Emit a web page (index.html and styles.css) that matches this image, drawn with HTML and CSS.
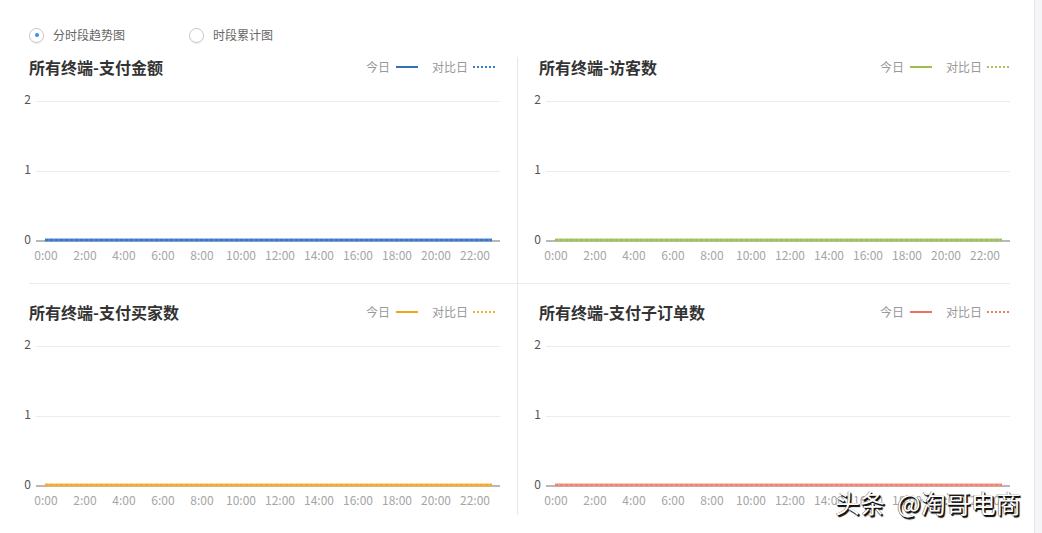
FILE: index.html
```html
<!DOCTYPE html>
<html lang="zh">
<head>
<meta charset="utf-8">
<title>分时段趋势图</title>
<link rel="stylesheet" href="styles.css">
</head>
<body>
<div class="page">
  <div class="radios">
    <label class="radio"><span class="dot checked"></span><span>分时段趋势图</span></label>
    <label class="radio"><span class="dot"></span><span>时段累计图</span></label>
  </div>
  <div class="grid">
    <section class="cell left top">
      <div class="head"><h3>所有终端-支付金额</h3>
        <div class="legend blue"><span>今日</span><i class="solid"></i><span class="cmp">对比日</span><i class="dots"></i></div></div>
      <svg class="chart blue" width="480" height="180" viewBox="0 0 480 180">
        <g class="grid-l"><line x1="16" y1="11.5" x2="480" y2="11.5"/><line x1="16" y1="81.5" x2="480" y2="81.5"/></g>
        <g class="ylab"><text x="11" y="14">2</text><text x="11" y="84">1</text><text x="11" y="154">0</text></g>
        <line class="base" x1="16" y1="151" x2="480" y2="151"/>
        <line class="data" x1="25" y1="150" x2="472" y2="150"/>
        <line class="dash" x1="25" y1="150" x2="472" y2="150"/>
        <g class="xlab"><text x="26" y="170">0:00</text><text x="65" y="170">2:00</text><text x="104" y="170">4:00</text><text x="143" y="170">6:00</text><text x="182" y="170">8:00</text><text x="221" y="170">10:00</text><text x="260" y="170">12:00</text><text x="299" y="170">14:00</text><text x="338" y="170">16:00</text><text x="377" y="170">18:00</text><text x="416" y="170">20:00</text><text x="455" y="170">22:00</text></g>
      </svg>
    </section>
    <section class="cell right top">
      <div class="head"><h3>所有终端-访客数</h3>
        <div class="legend green"><span>今日</span><i class="solid"></i><span class="cmp">对比日</span><i class="dots"></i></div></div>
      <svg class="chart green" width="480" height="180" viewBox="0 0 480 180">
        <g class="grid-l"><line x1="16" y1="11.5" x2="480" y2="11.5"/><line x1="16" y1="81.5" x2="480" y2="81.5"/></g>
        <g class="ylab"><text x="11" y="14">2</text><text x="11" y="84">1</text><text x="11" y="154">0</text></g>
        <line class="base" x1="16" y1="151" x2="480" y2="151"/>
        <line class="data" x1="25" y1="150" x2="472" y2="150"/>
        <line class="dash" x1="25" y1="150" x2="472" y2="150"/>
        <g class="xlab"><text x="26" y="170">0:00</text><text x="65" y="170">2:00</text><text x="104" y="170">4:00</text><text x="143" y="170">6:00</text><text x="182" y="170">8:00</text><text x="221" y="170">10:00</text><text x="260" y="170">12:00</text><text x="299" y="170">14:00</text><text x="338" y="170">16:00</text><text x="377" y="170">18:00</text><text x="416" y="170">20:00</text><text x="455" y="170">22:00</text></g>
      </svg>
    </section>
    <section class="cell left bottom">
      <div class="head"><h3>所有终端-支付买家数</h3>
        <div class="legend orange"><span>今日</span><i class="solid"></i><span class="cmp">对比日</span><i class="dots"></i></div></div>
      <svg class="chart orange" width="480" height="180" viewBox="0 0 480 180">
        <g class="grid-l"><line x1="16" y1="11.5" x2="480" y2="11.5"/><line x1="16" y1="81.5" x2="480" y2="81.5"/></g>
        <g class="ylab"><text x="11" y="14">2</text><text x="11" y="84">1</text><text x="11" y="154">0</text></g>
        <line class="base" x1="16" y1="151" x2="480" y2="151"/>
        <line class="data" x1="25" y1="150" x2="472" y2="150"/>
        <line class="dash" x1="25" y1="150" x2="472" y2="150"/>
        <g class="xlab"><text x="26" y="170">0:00</text><text x="65" y="170">2:00</text><text x="104" y="170">4:00</text><text x="143" y="170">6:00</text><text x="182" y="170">8:00</text><text x="221" y="170">10:00</text><text x="260" y="170">12:00</text><text x="299" y="170">14:00</text><text x="338" y="170">16:00</text><text x="377" y="170">18:00</text><text x="416" y="170">20:00</text><text x="455" y="170">22:00</text></g>
      </svg>
    </section>
    <section class="cell right bottom">
      <div class="head"><h3>所有终端-支付子订单数</h3>
        <div class="legend red"><span>今日</span><i class="solid"></i><span class="cmp">对比日</span><i class="dots"></i></div></div>
      <svg class="chart red" width="480" height="180" viewBox="0 0 480 180">
        <g class="grid-l"><line x1="16" y1="11.5" x2="480" y2="11.5"/><line x1="16" y1="81.5" x2="480" y2="81.5"/></g>
        <g class="ylab"><text x="11" y="14">2</text><text x="11" y="84">1</text><text x="11" y="154">0</text></g>
        <line class="base" x1="16" y1="151" x2="480" y2="151"/>
        <line class="data" x1="25" y1="150" x2="472" y2="150"/>
        <line class="dash" x1="25" y1="150" x2="472" y2="150"/>
        <g class="xlab"><text x="26" y="170">0:00</text><text x="65" y="170">2:00</text><text x="104" y="170">4:00</text><text x="143" y="170">6:00</text><text x="182" y="170">8:00</text><text x="221" y="170">10:00</text><text x="260" y="170">12:00</text><text x="299" y="170">14:00</text><text x="338" y="170">16:00</text><text x="377" y="170">18:00</text><text x="416" y="170">20:00</text><text x="455" y="170">22:00</text></g>
      </svg>
    </section>
  </div>
  <div class="watermark"><span>头条</span><span>@淘哥电商</span></div>
</div>
</body>
</html>
```
FILE: styles.css
```css
html, body {
  margin: 0;
  padding: 0;
  background: #f4f5f7;
  font-family: "Noto Sans CJK SC", "Microsoft YaHei", sans-serif;
}
.page {
  position: relative;
  width: 1035px;
  height: 533px;
  box-sizing: border-box;
  background: #fff;
  border-right: 1px solid #e4e6ea;
  padding: 27px 0 0 29px;
  overflow: hidden;
}
.radios {
  display: flex;
  gap: 64px;
  height: 16px;
  margin-bottom: 14px;
  font-size: 12px;
  color: #666;
}
.radio {
  display: flex;
  align-items: center;
  gap: 9px;
  line-height: 16px;
}
.dot {
  width: 13px;
  height: 13px;
  border: 1px solid #c8c8c8;
  border-radius: 50%;
  box-shadow: 0 1px 1px rgba(0,0,0,0.08);
  display: flex;
  align-items: center;
  justify-content: center;
}
.dot.checked::after {
  content: "";
  width: 4px;
  height: 4px;
  border-radius: 50%;
  background: #3d8fe0;
}
.grid {
  display: grid;
  grid-template-columns: 489px 492px;
}
.cell {
  display: flex;
  flex-direction: column;
}
.cell.left { border-right: 1px solid #e8e8e8; padding-right: 21px; }
.cell.right { padding-left: 21px; }
.cell.top { padding-bottom: 13px; border-bottom: 1px solid #ebebeb; }
.cell.bottom { padding-top: 18px; padding-bottom: 0; }
.cell.left.bottom { margin-bottom: 5px; }
.head {
  height: 20px;
  display: flex;
  align-items: center;
  justify-content: space-between;
  margin-bottom: 13px;
}
.head h3 {
  margin: 0;
  font-size: 16px;
  font-weight: bold;
  color: #333;
  line-height: 20px;
}
.legend {
  display: flex;
  align-items: center;
  font-size: 12px;
  color: #999;
  line-height: 16px;
}
.legend .solid {
  width: 22px;
  height: 2px;
  margin-left: 6px;
}
.legend .cmp { margin-left: 14px; }
.legend .dots {
  width: 23px;
  height: 2px;
  margin-left: 5px;
}
.legend.blue .solid { background: #3470b8; }
.legend.blue .dots { background: repeating-linear-gradient(90deg, #3a7ccc 0 2px, transparent 2px 4px); }
.legend.green .solid { background: #9dbf4f; }
.legend.green .dots { background: repeating-linear-gradient(90deg, #a8c45a 0 2px, transparent 2px 4px); }
.legend.orange .solid { background: #f0a61c; }
.legend.orange .dots { background: repeating-linear-gradient(90deg, #f2ad2c 0 2px, transparent 2px 4px); }
.legend.red .solid { background: #ee7060; }
.legend.red .dots { background: repeating-linear-gradient(90deg, #ee7a6a 0 2px, transparent 2px 4px); }
.chart {
  display: block;
  margin-left: -9px;
  overflow: visible;
  font-family: "Noto Sans CJK SC", "Microsoft YaHei", sans-serif;
  font-size: 12px;
}
.grid-l line { stroke: #ececec; stroke-width: 1; }
.ylab text { fill: #555; text-anchor: end; }
.xlab text { fill: #a6a6a6; text-anchor: middle; }
.base { stroke: #b8b8b8; stroke-width: 2; }
.data { stroke-width: 3; }
.dash { stroke-width: 1; stroke-dasharray: 3 2; }
.chart.blue .data { stroke: #4b88d8; }
.chart.blue .dash { stroke: #2c64b4; }
.chart.green .data { stroke: #a9c96a; }
.chart.green .dash { stroke: #93b552; }
.chart.orange .data { stroke: #f5b347; }
.chart.orange .dash { stroke: #e99e22; }
.chart.red .data { stroke: #f29384; }
.chart.red .dash { stroke: #e9766a; }
.watermark {
  position: absolute;
  left: 835px;
  top: 486px;
  display: flex;
  gap: 12px;
  font-size: 25px;
  line-height: 32px;
  color: #fff;
  white-space: nowrap;
  text-shadow: 1px 1px 0 #111, 1.5px 1.5px 1px #000, -0.5px -0.5px 0 #555;
}
```
